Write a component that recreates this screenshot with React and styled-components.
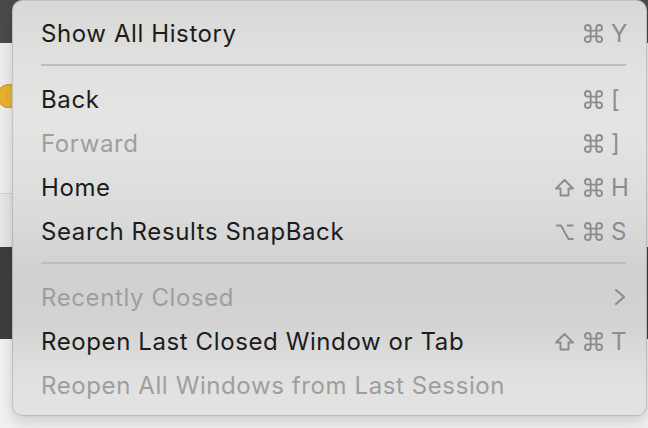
import React from 'react'
import styled, { createGlobalStyle } from 'styled-components'

const Global = createGlobalStyle`
  html, body { margin: 0; padding: 0; }
  body { width: 648px; height: 428px; overflow: hidden; font-family: Inter, "Noto Sans", sans-serif; }
`

const Scene = styled.div`
  position: relative;
  width: 648px;
  height: 428px;
  display: flex;
  flex-direction: column;
  overflow: hidden;
`

const Band = styled.div`
  height: ${p => p.h}px;
  flex: ${p => (p.h ? 'none' : '1')};
  background: ${p => p.bg};
  border-top: ${p => (p.line ? '1px solid #d2d2d2' : 'none')};
  position: relative;
`

const Dot = styled.div`
  position: absolute;
  left: -3px;
  top: 41px;
  width: 24px;
  height: 24px;
  border-radius: 50%;
  background: #e8b232;
  box-shadow: inset 0 0 0 1px #cf9b22;
`

const Menu = styled.div`
  position: absolute;
  left: 12px;
  top: 0;
  width: 635px;
  height: 416px;
  box-sizing: border-box;
  padding: 10px 20px 8px 28px;
  border-radius: 10px;
  border: 1px solid rgba(0, 0, 0, 0.14);
  background: linear-gradient(
    180deg,
    #d8d8d6 0%,
    #e2e2e0 18%,
    #e4e4e3 30%,
    #dcdcdc 50%,
    #d0d0d0 66%,
    #d3d3d3 78%,
    #e1e1e1 92%,
    #e3e3e3 100%
  );
  box-shadow: 0 6px 14px rgba(0, 0, 0, 0.14), 0 0 2px rgba(0, 0, 0, 0.1);
`

const Row = styled.div`
  height: 44px;
  display: flex;
  align-items: center;
  justify-content: space-between;
  font-size: 24px;
  letter-spacing: 0.6px;
  color: ${p => (p.disabled ? '#9e9e9e' : '#1c1c1c')};
`

const Sep = styled.div`
  height: 22px;
  display: flex;
  align-items: flex-start;
  padding-top: 9px;
  box-sizing: border-box;
  &::after {
    content: '';
    flex: 1;
    height: 2px;
    background: #bdbdbd;
  }
`

const Keys = styled.div`
  display: flex;
  align-items: center;
  color: #8c8c8c;
  font-size: 24px;
  letter-spacing: 0;
`

const Mod = styled.svg`
  width: 19px;
  height: 19px;
  margin-right: 10px;
  flex: none;
  &:last-of-type { margin-right: 8px; }
`

const Key = styled.span`
  width: 15px;
  text-align: left;
`

const Chevron = styled.svg`
  width: 14px;
  height: 18px;
  margin-right: -1px;
`

const stroke = { fill: 'none', stroke: '#8c8c8c', strokeWidth: 1.9, strokeLinecap: 'round', strokeLinejoin: 'round' }

const glyphs = {
  cmd: {
    box: '2 2 20 20',
    path: <path {...stroke} strokeWidth={2} d="M15 6v12a3 3 0 1 0 3-3H6a3 3 0 1 0 3 3V6a3 3 0 1 0-3 3h12a3 3 0 1 0-3-3" />,
  },
  shift: {
    box: '0 0 19 19',
    path: <path {...stroke} d="M9.5 2 L18 10.5 H13.5 V17.5 H5.5 V10.5 H1 Z" />,
  },
  opt: {
    box: '0 0 19 19',
    path: <path {...stroke} strokeLinecap="butt" d="M1 3.5 H6 L13.5 17 H18.5 M12 3.5 H18.5" />,
  },
}

const items = [
  { label: 'Show All History', mods: ['cmd'], key: 'Y' },
  'sep',
  { label: 'Back', mods: ['cmd'], key: '[' },
  { label: 'Forward', mods: ['cmd'], key: ']', disabled: true },
  { label: 'Home', mods: ['shift', 'cmd'], key: 'H' },
  { label: 'Search Results SnapBack', mods: ['opt', 'cmd'], key: 'S' },
  'sep',
  { label: 'Recently Closed', disabled: true, sub: true },
  { label: 'Reopen Last Closed Window or Tab', mods: ['shift', 'cmd'], key: 'T' },
  { label: 'Reopen All Windows from Last Session', disabled: true },
]

function App() {
  return (
    <Scene>
      <Global />
      <Band h={43} bg="#4a4a4a" />
      <Band h={150} bg="#ededed"><Dot /></Band>
      <Band h={53} bg="#e6e6e6" line />
      <Band h={92} bg="#3e3e3e" />
      <Band bg="#f1f1f1" />
      <Menu>
        {items.map((it, i) =>
          it === 'sep' ? (
            <Sep key={i} />
          ) : (
            <Row key={i} disabled={it.disabled}>
              <span>{it.label}</span>
              {it.sub ? (
                <Chevron viewBox="0 0 14 18">
                  <path d="M3 2 L11 9 L3 16" fill="none" stroke="#8a8a8a" strokeWidth="2" strokeLinecap="round" strokeLinejoin="round" />
                </Chevron>
              ) : it.key ? (
                <Keys>
                  {it.mods.map((m, j) => (
                    <Mod key={j} viewBox={glyphs[m].box}>{glyphs[m].path}</Mod>
                  ))}
                  <Key>{it.key}</Key>
                </Keys>
              ) : null}
            </Row>
          )
        )}
      </Menu>
    </Scene>
  )
}

export default App
